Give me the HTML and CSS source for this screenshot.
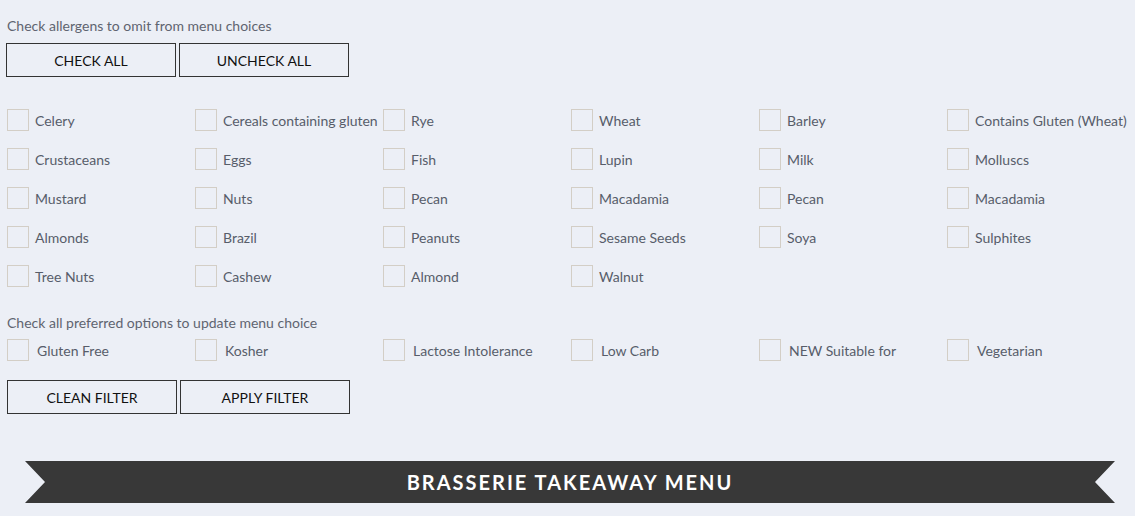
FILE: index.html
```html
<!DOCTYPE html>
<html lang="en">
<head>
<meta charset="UTF-8">
<meta name="viewport" content="width=device-width, initial-scale=1.0">
<link rel="stylesheet" href="styles.css">
<title>Brasserie Takeaway Menu</title>
</head>
<body>

<div class="filters">
    <p class="hint">Check allergens to omit from menu choices</p>
    <div class="actions">
        <button type="button" class="btn">CHECK ALL</button>
        <button type="button" class="btn">UNCHECK ALL</button>
    </div>

    <div class="allergens">
        <label class="opt"><span class="box"></span>Celery</label>
        <label class="opt"><span class="box"></span>Cereals containing gluten</label>
        <label class="opt"><span class="box"></span>Rye</label>
        <label class="opt"><span class="box"></span>Wheat</label>
        <label class="opt"><span class="box"></span>Barley</label>
        <label class="opt"><span class="box"></span>Contains Gluten (Wheat)</label>

        <label class="opt"><span class="box"></span>Crustaceans</label>
        <label class="opt"><span class="box"></span>Eggs</label>
        <label class="opt"><span class="box"></span>Fish</label>
        <label class="opt"><span class="box"></span>Lupin</label>
        <label class="opt"><span class="box"></span>Milk</label>
        <label class="opt"><span class="box"></span>Molluscs</label>

        <label class="opt"><span class="box"></span>Mustard</label>
        <label class="opt"><span class="box"></span>Nuts</label>
        <label class="opt"><span class="box"></span>Pecan</label>
        <label class="opt"><span class="box"></span>Macadamia</label>
        <label class="opt"><span class="box"></span>Pecan</label>
        <label class="opt"><span class="box"></span>Macadamia</label>

        <label class="opt"><span class="box"></span>Almonds</label>
        <label class="opt"><span class="box"></span>Brazil</label>
        <label class="opt"><span class="box"></span>Peanuts</label>
        <label class="opt"><span class="box"></span>Sesame Seeds</label>
        <label class="opt"><span class="box"></span>Soya</label>
        <label class="opt"><span class="box"></span>Sulphites</label>

        <label class="opt"><span class="box"></span>Tree Nuts</label>
        <label class="opt"><span class="box"></span>Cashew</label>
        <label class="opt"><span class="box"></span>Almond</label>
        <label class="opt"><span class="box"></span>Walnut</label>
    </div>

    <p class="hint hint-pref">Check all preferred options to update menu choice</p>
    <div class="prefs">
        <label class="opt"><span class="box"></span>Gluten Free</label>
        <label class="opt"><span class="box"></span>Kosher</label>
        <label class="opt"><span class="box"></span>Lactose Intolerance</label>
        <label class="opt"><span class="box"></span>Low Carb</label>
        <label class="opt"><span class="box"></span>NEW Suitable for</label>
        <label class="opt"><span class="box"></span>Vegetarian</label>
    </div>

    <div class="actions actions-bottom">
        <button type="button" class="btn">CLEAN FILTER</button>
        <button type="button" class="btn">APPLY FILTER</button>
    </div>
</div>

<div class="ribbon">
    <h2>BRASSERIE TAKEAWAY MENU</h2>
</div>

</body>
</html>
```

FILE: styles.css
```css
body {
    font-family: Lato, "Open Sans", sans-serif;
    margin: 0;
    background-color: #eceff6;
    color: #575d6a;
    font-size: 14px;
}

.filters {
    padding: 17px 0 0 7px;
}

.hint {
    margin: 0;
    line-height: 18px;
    color: #5f6470;
}

.actions {
    display: flex;
    gap: 3px;
    margin: 8px 0 0 -1px;
}

.btn {
    width: 170px;
    height: 34px;
    border: 1px solid #333;
    background-color: transparent;
    font-family: Lato, sans-serif;
    font-size: 14px;
    color: #111;
    cursor: pointer;
}

.btn:hover {
    background-color: #dde1ea;
}

.allergens,
.prefs {
    display: grid;
    grid-template-columns: repeat(6, 188px);
    row-gap: 17px;
}

.allergens {
    margin-top: 32px;
}

.opt {
    display: flex;
    align-items: center;
    height: 22px;
    white-space: nowrap;
    cursor: pointer;
}

.box {
    width: 20px;
    height: 20px;
    border: 1px solid #d3cec6;
    margin-right: 6px;
    flex: none;
}

.hint-pref {
    margin-top: 27px;
}

.prefs {
    margin-top: 7px;
}

.prefs .box {
    margin-right: 8px;
}

.actions-bottom {
    margin: 19px 0 0 0;
}

.ribbon {
    margin: 47px 20px 0 25px;
    height: 42px;
    background-color: #383838;
    clip-path: polygon(0 0, 100% 0, calc(100% - 20px) 50%, 100% 100%, 0 100%, 20px 50%);
    display: flex;
    align-items: center;
    justify-content: center;
}

.ribbon h2 {
    margin: 0;
    color: #fff;
    font-size: 20px;
    font-weight: bold;
    letter-spacing: 2px;
}
```
